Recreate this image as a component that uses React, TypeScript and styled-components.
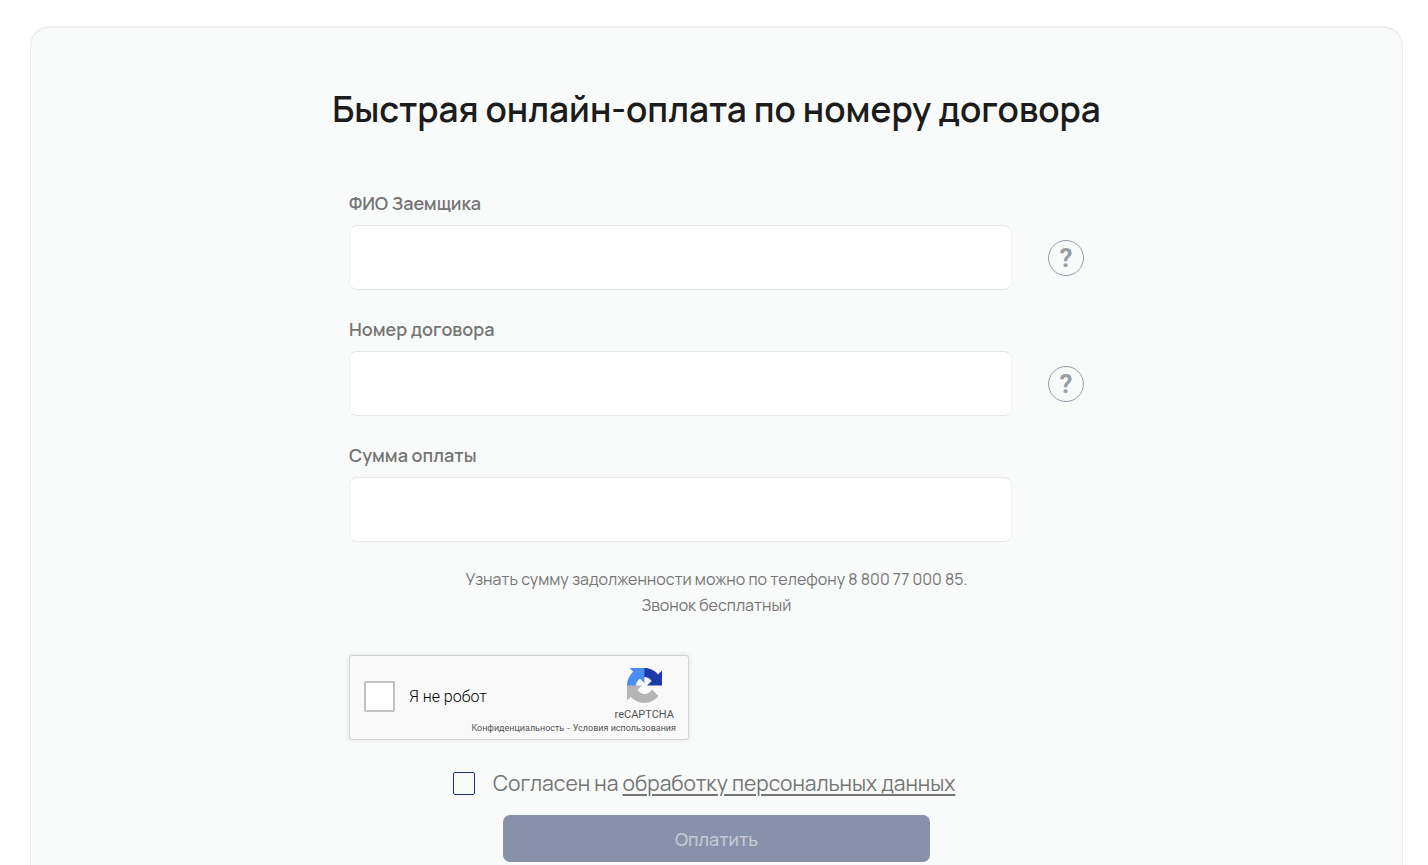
import React, { useState } from "react";
import styled, { createGlobalStyle } from "styled-components";

const GlobalStyle = createGlobalStyle`
  *, *::before, *::after {
    box-sizing: border-box;
  }
  body {
    margin: 0;
    background: #ffffff;
    color: #757575;
    font-family: Manrope, Inter, "Open Sans", sans-serif;
  }
`;

const Page = styled.main`
  padding: 26px 25px 40px 30px;
`;

const Card = styled.section`
  display: flex;
  flex-direction: column;
  align-items: center;
  padding: 56px 24px;
  background: #f9fbfa;
  border: 1px solid #ebeded;
  border-top-width: 2px;
  border-radius: 20px;
`;

const Title = styled.h1`
  margin: 0;
  color: #1c1c1c;
  font-size: 35px;
  font-weight: 600;
  line-height: 50px;
  text-align: center;
`;

const Form = styled.form`
  display: flex;
  flex-direction: column;
  width: 100%;
  max-width: 735px;
  margin-top: 56px;
`;

const Fields = styled.div`
  display: flex;
  flex-direction: column;
  gap: 26px;
`;

const Field = styled.div`
  display: flex;
  flex-direction: column;
  gap: 9px;
`;

const FieldLabel = styled.label`
  font-size: 18px;
  font-weight: 600;
  line-height: 26px;
`;

const FieldRow = styled.div<{ $hint: boolean }>`
  display: flex;
  align-items: center;
  gap: 36px;
  padding-right: ${({ $hint }) => ($hint ? "0" : "72px")};
`;

const TextInput = styled.input`
  flex: 1;
  min-width: 0;
  height: 65px;
  padding: 0 20px;
  background: #ffffff;
  border: 1px solid;
  border-color: #e5e7e7 #f0f2f2;
  border-radius: 8px;
  color: #1c1c1c;
  font: inherit;
  font-size: 18px;
`;

const HelpButton = styled.button`
  display: flex;
  align-items: center;
  justify-content: center;
  flex: none;
  width: 36px;
  height: 36px;
  padding: 0;
  background: transparent;
  border: 1px solid #9a9aa8;
  border-radius: 50%;
  color: #9a9da6;
  font-family: Roboto, sans-serif;
  font-size: 26px;
  font-weight: 700;
  line-height: 34px;
  cursor: pointer;
`;

const Note = styled.p`
  margin: 24px 0 0;
  font-size: 16px;
  line-height: 26px;
  text-align: center;
`;

const Captcha = styled.div`
  display: flex;
  flex-direction: column;
  justify-content: space-between;
  width: 340px;
  height: 85px;
  margin-top: 37px;
  padding: 10px 12px 5px 14px;
  background: #f9f9f9;
  border: 1px solid #d3d3d3;
  border-radius: 3px;
  box-shadow: 0 0 4px 1px rgba(0, 0, 0, 0.08);
  color: #555555;
  font-family: Roboto, sans-serif;
`;

const CaptchaMain = styled.div`
  display: flex;
  justify-content: space-between;
`;

const CaptchaLabel = styled.label`
  display: flex;
  align-items: center;
  gap: 14px;
  padding-top: 4px;
  color: #000000;
  font-size: 16px;
  font-weight: 300;
`;

const CaptchaBox = styled.input`
  appearance: none;
  width: 31px;
  height: 31px;
  margin: 0;
  background: #ffffff;
  border: 2px solid #c1c1c1;
  border-radius: 2px;
  cursor: pointer;

  &:checked {
    background: #4285f4;
  }
`;

const CaptchaBrand = styled.div`
  display: flex;
  flex-direction: column;
  align-items: center;
  gap: 5px;
  padding: 2px 2px 0 0;
  font-size: 11px;
  line-height: 14px;
`;

const CaptchaLinks = styled.div`
  display: flex;
  justify-content: flex-end;
  gap: 3px;
  font-size: 9px;
  line-height: 12px;
`;

const CaptchaLink = styled.a`
  color: inherit;
  text-decoration: none;
`;

const Consent = styled.div`
  display: flex;
  align-items: center;
  gap: 18px;
  margin-top: 27px;
  padding-left: 104px;
  font-size: 21px;
  line-height: 32px;
  white-space: nowrap;
`;

const ConsentBox = styled.input`
  appearance: none;
  flex: none;
  width: 22px;
  height: 23px;
  margin: 0;
  border: 1px solid #1b2f6b;
  border-radius: 2px;
  cursor: pointer;

  &:checked {
    background: #1b2f6b;
  }
`;

const ConsentLink = styled.a`
  color: inherit;
  text-decoration: underline;
  text-decoration-thickness: 2px;
  text-underline-offset: 3px;
`;

const SubmitButton = styled.button`
  align-self: center;
  width: 427px;
  height: 47px;
  margin-top: 16px;
  padding: 0;
  background: #8891aa;
  border: 0;
  border-radius: 7px;
  color: #c5cad4;
  font: inherit;
  font-size: 18px;
  font-weight: 500;
`;

function RecaptchaLogo() {
  return (
    <svg width="35" height="35" viewBox="0 0 64 64" aria-hidden="true">
      <path
        fill="#1c3aa9"
        d="M64 31.955l-.033-1.37V4.687l-7.16 7.16C50.948 4.674 42.033.093 32.05.093c-10.4 0-19.622 4.96-25.458 12.64l11.736 11.86a15.55 15.55 0 0 1 4.754-5.334c2.05-1.6 4.952-2.906 8.968-2.906.485 0 .86.057 1.135.163 4.976.393 9.288 3.14 11.828 7.124l-8.307 8.307L64 31.953"
      />
      <path
        fill="#4a8df6"
        d="M31.862.094l-1.37.033H4.594l7.16 7.16C4.58 13.147 0 22.06 0 32.046c0 10.4 4.96 19.622 12.64 25.458L24.5 45.768a15.55 15.55 0 0 1-5.334-4.754c-1.6-2.05-2.906-4.952-2.906-8.968 0-.485.057-.86.163-1.135.393-4.976 3.14-9.288 7.124-11.828l8.307 8.307L31.86.095"
      />
      <path
        fill="#b5b5b5"
        d="M.001 32.045l.033 1.37v25.898l7.16-7.16c5.86 7.173 14.774 11.754 24.76 11.754 10.4 0 19.622-4.96 25.458-12.64l-11.736-11.86a15.55 15.55 0 0 1-4.754 5.334c-2.05 1.6-4.952 2.906-8.968 2.906-.485 0-.86-.057-1.135-.163-4.976-.393-9.288-3.14-11.828-7.124l8.307-8.307c-10.522.04-22.4.066-27.295-.005"
      />
    </svg>
  );
}

const fields = [
  { id: "borrower", label: "ФИО Заемщика", hint: true },
  { id: "contract", label: "Номер договора", hint: true },
  { id: "amount", label: "Сумма оплаты", hint: false },
];

export default function App() {
  const [agreed, setAgreed] = useState(false);

  return (
    <>
      <GlobalStyle />
      <Page>
        <Card>
          <Title>Быстрая онлайн-оплата по номеру договора</Title>
          <Form onSubmit={(event) => event.preventDefault()}>
            <Fields>
              {fields.map(({ id, label, hint }) => (
                <Field key={id}>
                  <FieldLabel htmlFor={id}>{label}</FieldLabel>
                  <FieldRow $hint={hint}>
                    <TextInput id={id} name={id} type="text" />
                    {hint && <HelpButton type="button">?</HelpButton>}
                  </FieldRow>
                </Field>
              ))}
            </Fields>
            <Note>
              Узнать сумму задолженности можно по телефону 8 800 77 000 85.
              <br />
              Звонок бесплатный
            </Note>
            <Captcha>
              <CaptchaMain>
                <CaptchaLabel>
                  <CaptchaBox type="checkbox" name="captcha" />
                  Я не робот
                </CaptchaLabel>
                <CaptchaBrand>
                  <RecaptchaLogo />
                  reCAPTCHA
                </CaptchaBrand>
              </CaptchaMain>
              <CaptchaLinks>
                <CaptchaLink href="#privacy">Конфиденциальность</CaptchaLink>
                <span>-</span>
                <CaptchaLink href="#terms">Условия использования</CaptchaLink>
              </CaptchaLinks>
            </Captcha>
            <Consent>
              <ConsentBox
                id="consent"
                type="checkbox"
                checked={agreed}
                onChange={(event) => setAgreed(event.target.checked)}
              />
              <label htmlFor="consent">
                Согласен на{" "}
                <ConsentLink href="#personal-data">
                  обработку персональных данных
                </ConsentLink>
              </label>
            </Consent>
            <SubmitButton type="submit">Оплатить</SubmitButton>
          </Form>
        </Card>
      </Page>
    </>
  );
}
